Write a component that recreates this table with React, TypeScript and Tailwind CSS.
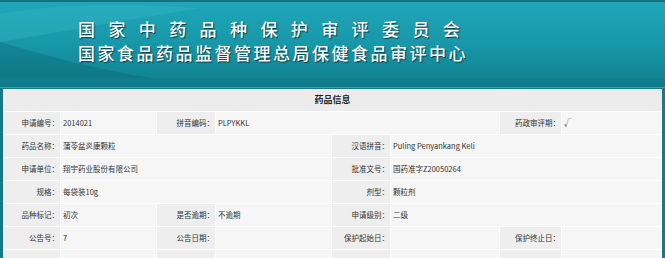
const labelCls =
  "bg-[#eeeeee] text-right pr-[1px] flex items-center justify-end whitespace-nowrap";
const valueCls = "bg-[#f6f6f6] pl-[2px] flex items-center whitespace-nowrap";

type Cell = { text: string; label?: boolean; span?: number };

const rows: Cell[][] = [
  [
    { text: "申请编号：", label: true },
    { text: "2014021" },
    { text: "拼音编码：", label: true },
    { text: "PLPYKKL", span: 3 },
    { text: "药政审评期：", label: true },
    { text: "√" },
  ],
  [
    { text: "药品名称：", label: true },
    { text: "蒲苓盆炎康颗粒", span: 3 },
    { text: "汉语拼音：", label: true },
    { text: "Puling Penyankang Keli", span: 3 },
  ],
  [
    { text: "申请单位：", label: true },
    { text: "翔宇药业股份有限公司", span: 3 },
    { text: "批准文号：", label: true },
    { text: "国药准字Z20050264", span: 3 },
  ],
  [
    { text: "规格：", label: true },
    { text: "每袋装10g", span: 3 },
    { text: "剂型：", label: true },
    { text: "颗粒剂", span: 3 },
  ],
  [
    { text: "品种标记：", label: true },
    { text: "初次" },
    { text: "是否逾期：", label: true },
    { text: "不逾期" },
    { text: "申请级别：", label: true },
    { text: "二级", span: 3 },
  ],
  [
    { text: "公告号：", label: true },
    { text: "7" },
    { text: "公告日期：", label: true },
    { text: "" },
    { text: "保护起始日：", label: true },
    { text: "" },
    { text: "保护终止日：", label: true },
    { text: "" },
  ],
  [
    { text: "", label: true },
    { text: "" },
    { text: "", label: true },
    { text: "" },
    { text: "", label: true },
    { text: "" },
    { text: "", label: true },
    { text: "" },
  ],
];

function Header() {
  return (
    <div className="relative h-[87px] border-t-2 border-[#0f7380] bg-gradient-to-b from-[#1fa7b9] via-[#1897a8] to-[#0f7e8c] overflow-hidden">
      {/* background swoosh */}
      <svg
        className="absolute inset-0"
        width="665"
        height="87"
        viewBox="0 0 665 87"
      >
        <path d="M0 12 C60 0 140 2 200 6 L0 40 Z" fill="#3bb6c6" opacity="0.35" />
        <path d="M0 40 C50 55 100 68 150 76 L0 76 Z" fill="#0b6472" opacity="0.35" />
        <path d="M0 76 L665 76 L665 87 L0 87 Z" fill="#0e7785" opacity="0.5" />
      </svg>
      <div
        className="relative pl-[78px] pt-[18px] text-white leading-none font-medium"
        style={{ textShadow: "1px 1px 1px rgba(0,40,50,0.8)" }}
      >
        <div className="text-[17px] tracking-[13.4px] whitespace-nowrap">
          国家中药品种保护审评委员会
        </div>
        <div className="mt-[7px] text-[17px] tracking-[2.5px] whitespace-nowrap">
          国家食品药品监督管理总局保健食品审评中心
        </div>
      </div>
    </div>
  );
}

export default function App() {
  return (
    <div className="w-[665px] h-[258px] overflow-hidden bg-[#137b87] font-['Noto_Sans_CJK_SC',sans-serif]">
      <Header />
      <div className="h-px bg-[#3aa0ac]" />
      <div className="ml-[3px] mr-[3px] mt-px bg-white text-[7.5px] text-[#333]">
        <div className="h-[22px] bg-[#ececec] flex items-center justify-center font-bold text-[9px] text-[#222]">
          药品信息
        </div>
        <div className="grid grid-cols-[57px_95px_58px_115px_58px_108px_61px_100px] auto-rows-[22px] gap-px pt-px">
          {rows.map((row, ri) =>
            row.map((c, ci) => (
              <div
                key={`${ri}-${ci}`}
                className={`${c.label ? labelCls : valueCls} ${
                  c.span === 3 ? "col-span-3" : ""
                }`}
              >
                {c.text}
              </div>
            ))
          )}
        </div>
      </div>
    </div>
  );
}
